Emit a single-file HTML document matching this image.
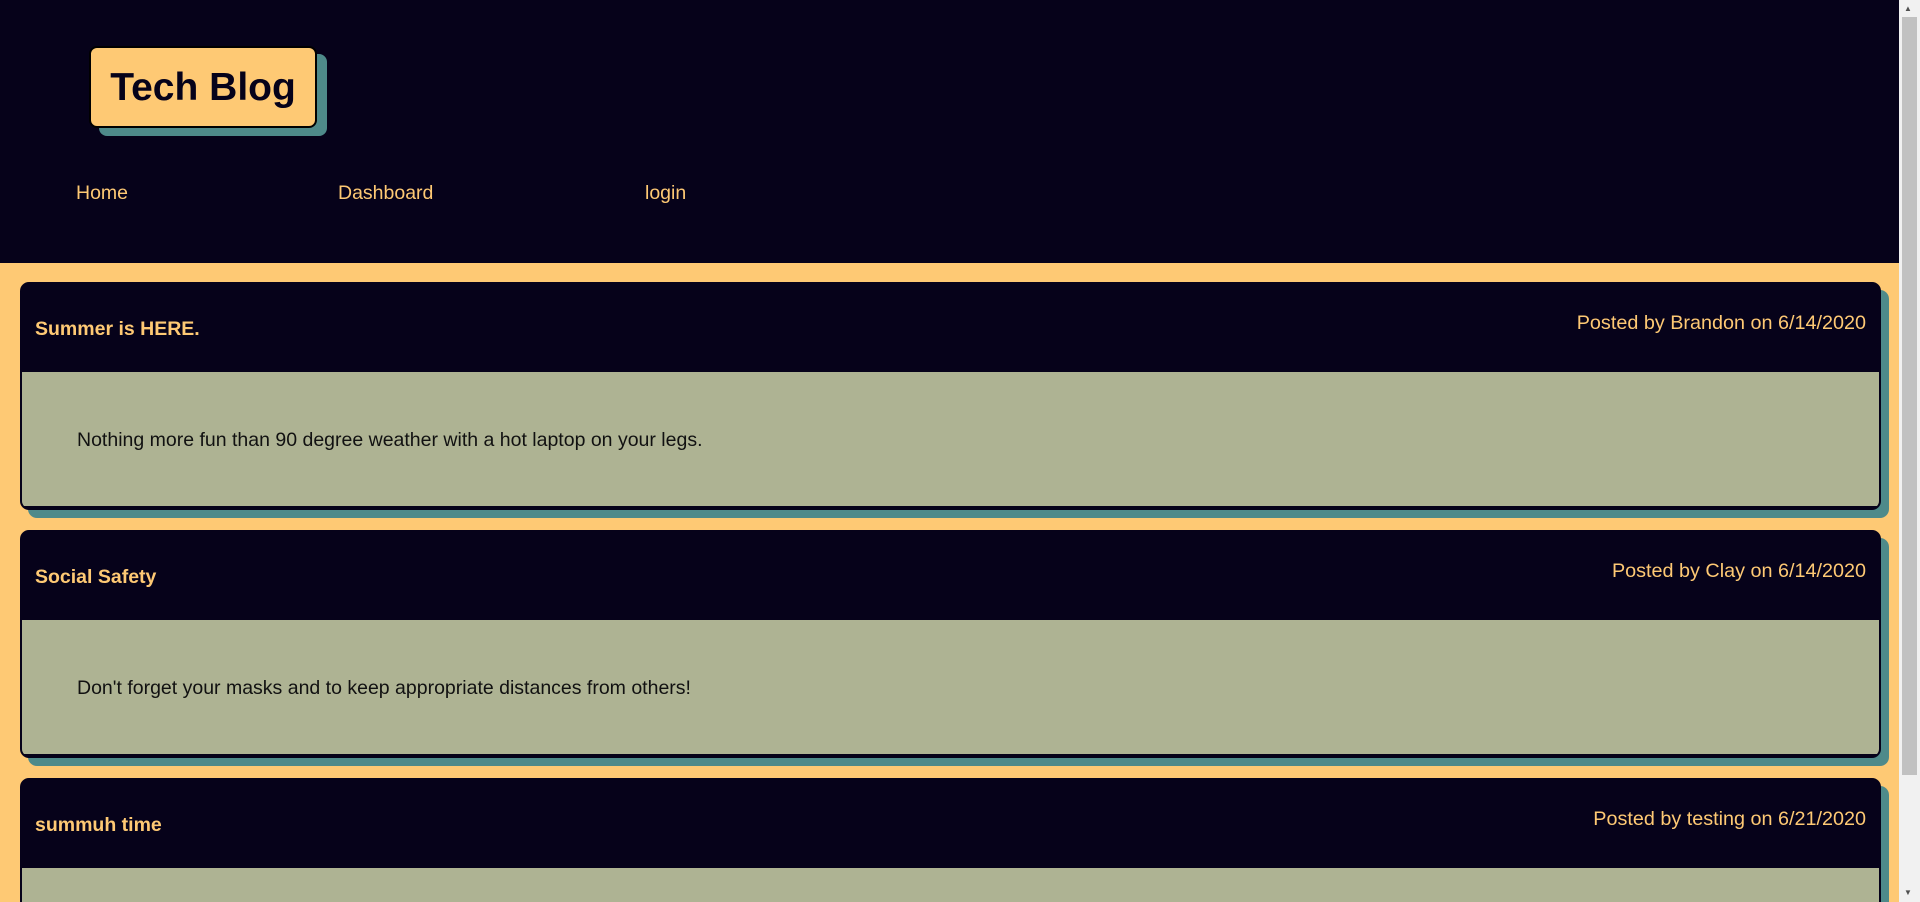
<!DOCTYPE html>
<html><head><style>
html,body{margin:0;padding:0;width:1920px;height:902px;overflow:hidden}
body{background:#fec974;font-family:"Liberation Sans",Arial,sans-serif;position:relative}
.hdr{position:absolute;left:0;top:0;width:1899px;height:263px;background:#06021a}
.logo{position:absolute;left:89px;top:46px;width:228px;height:82px;background:#fec974;border:2px solid #000;border-radius:8px;box-shadow:10px 8px 0 #4e8a8a;box-sizing:border-box;font-weight:bold;font-size:39px;color:#06021a;line-height:80px;text-align:center}
.nav{position:absolute;top:182px;font-size:19.5px;color:#fec974}
.main{position:absolute;left:0;top:263px;width:1899px;height:639px;background:#fec974;overflow:hidden}
.card{position:absolute;left:20px;width:1861px;height:228px;border:2px solid #06021a;border-radius:9px;background:#06021a;box-shadow:8px 8px 0 #4e8a8a;box-sizing:border-box;overflow:hidden}
.card .t{position:absolute;left:13px;top:34px;font-weight:bold;font-size:19.5px;color:#fec974}
.card .d{position:absolute;right:13px;top:28px;font-size:19.8px;color:#fec974}
.card .b{position:absolute;left:0;right:0;top:88px;height:134px;background:#aeb393}
.card .b p{margin:0;position:absolute;left:55px;top:57px;font-size:19.5px;color:#111}
.sb{position:absolute;left:1899px;top:0;width:21px;height:902px;background:#f1f1f1}
.th{position:absolute;left:1902px;top:17px;width:15px;height:758px;background:#c1c1c1}
</style></head><body>
<div class="hdr">
<div class="logo">Tech Blog</div>
<div class="nav" style="left:76px">Home</div>
<div class="nav" style="left:338px">Dashboard</div>
<div class="nav" style="left:645px">login</div>
</div>
<div class="main">
<div class="card" style="top:19px"><div class="t">Summer is HERE.</div><div class="d">Posted by Brandon on 6/14/2020</div><div class="b"><p>Nothing more fun than 90 degree weather with a hot laptop on your legs.</p></div></div>
<div class="card" style="top:267px"><div class="t">Social Safety</div><div class="d">Posted by Clay on 6/14/2020</div><div class="b"><p>Don't forget your masks and to keep appropriate distances from others!</p></div></div>
<div class="card" style="top:515px"><div class="t">summuh time</div><div class="d">Posted by testing on 6/21/2020</div><div class="b"><p></p></div></div>
</div>
<div class="sb"></div><div class="th"></div>
<div style="position:absolute;left:1904px;top:4px;font-size:8px;color:#505050">▲</div>
<div style="position:absolute;left:1904px;top:888px;font-size:8px;color:#505050">▼</div>
</body></html>
